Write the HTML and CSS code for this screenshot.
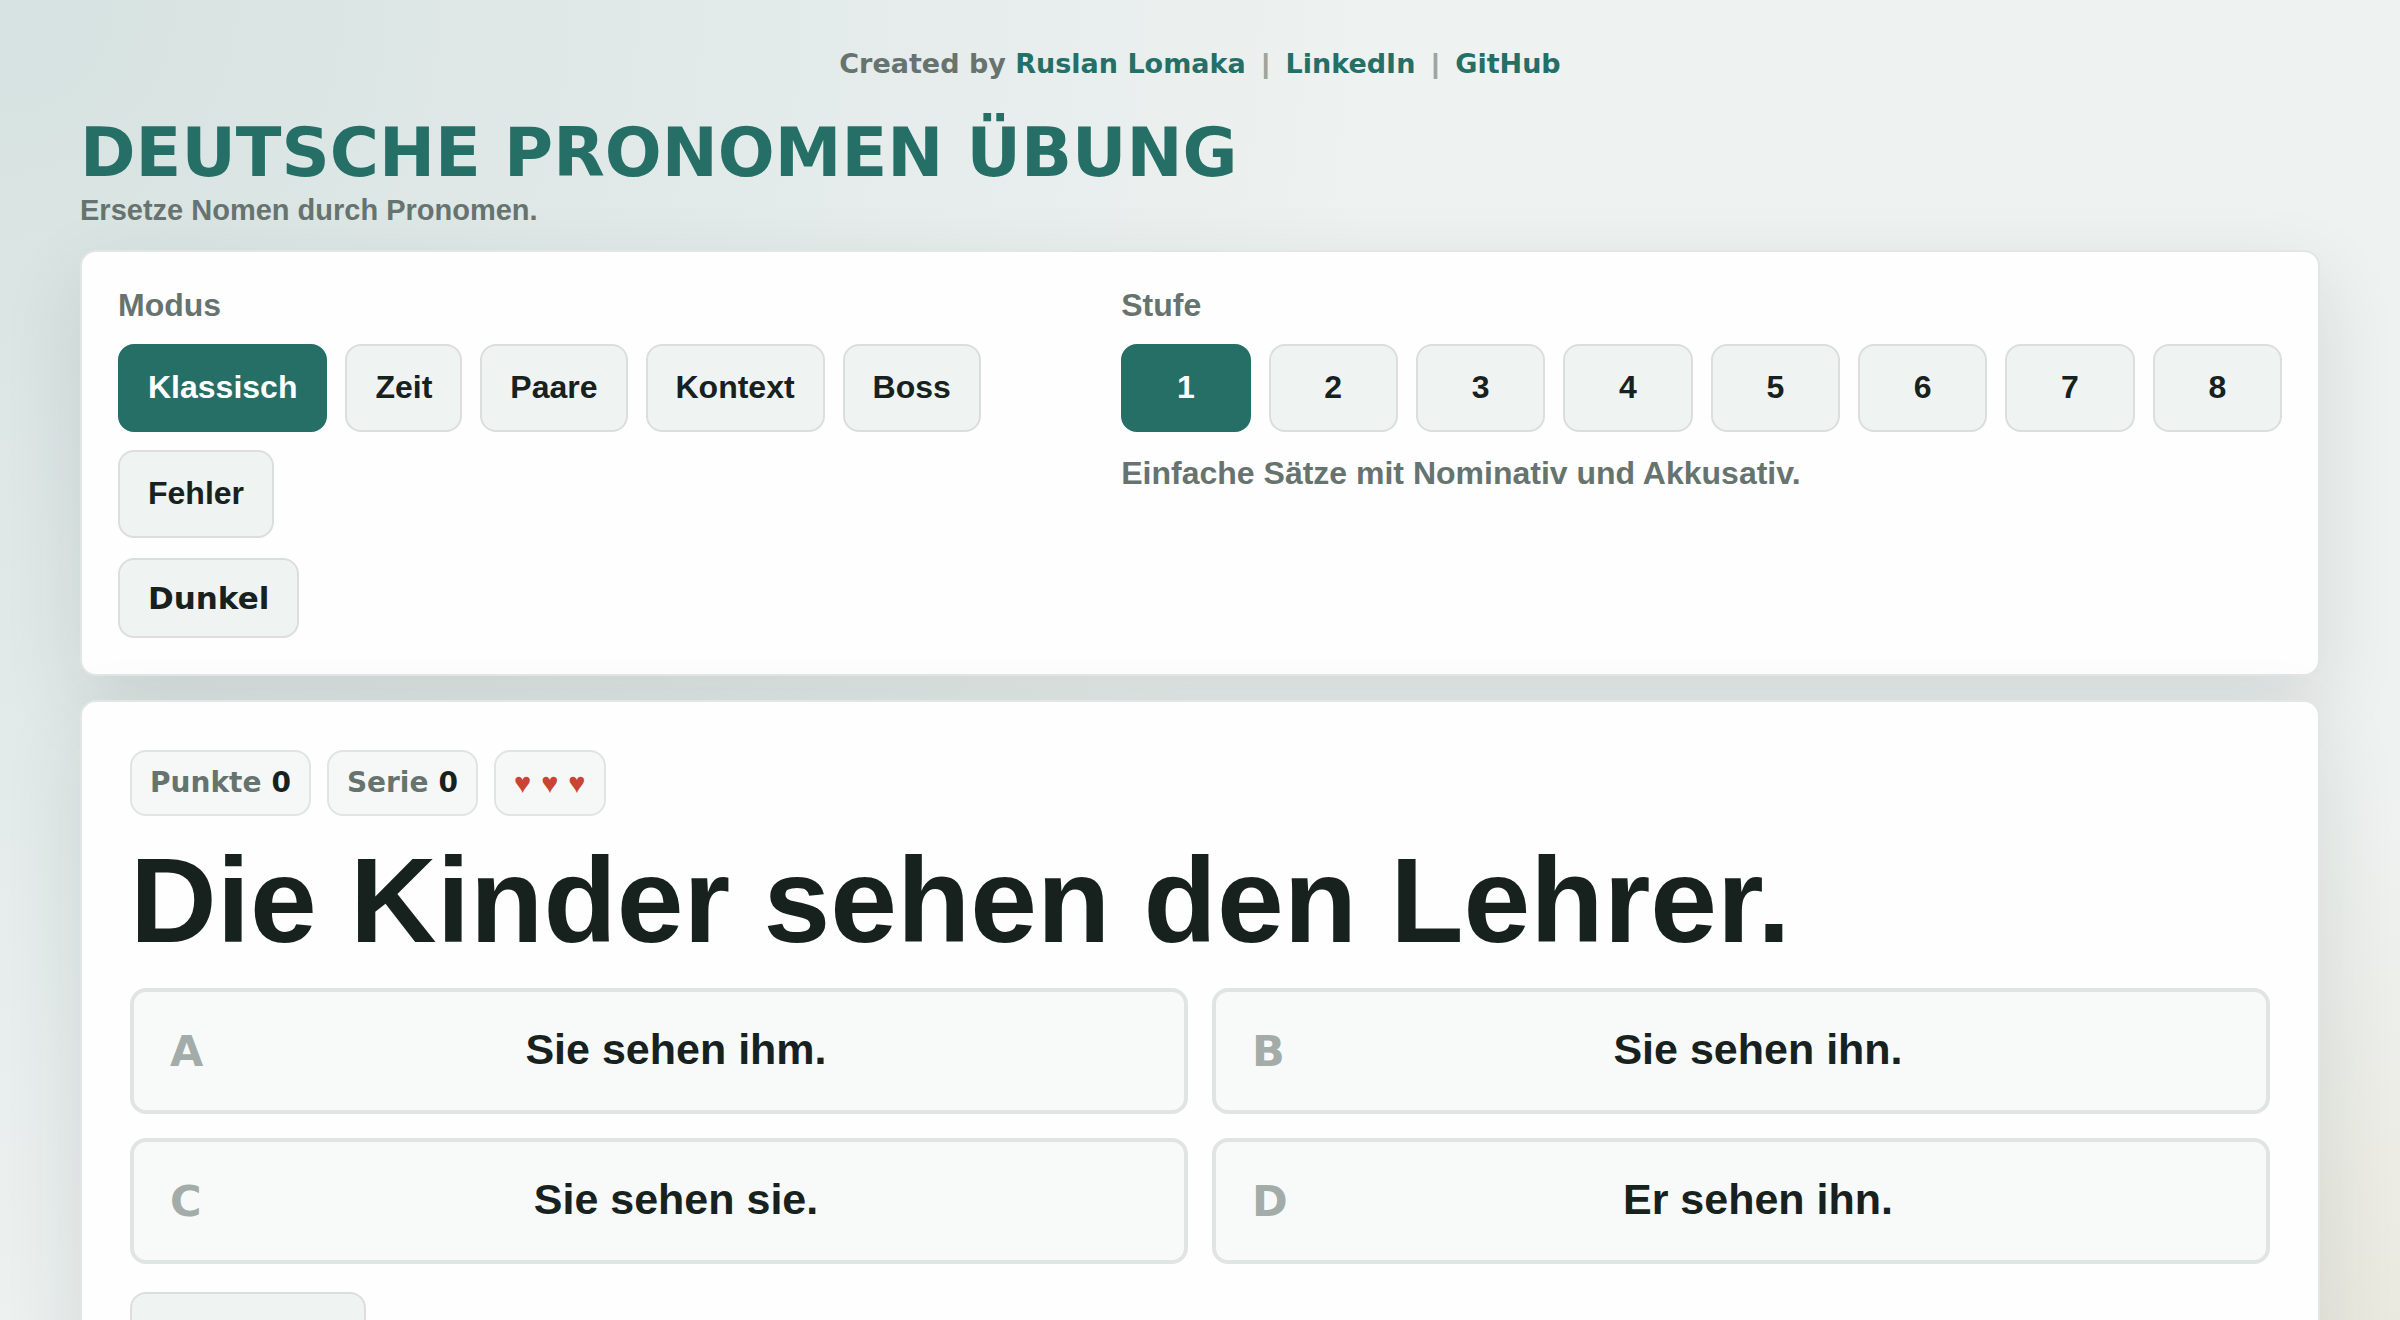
FILE: index.html
```
<!DOCTYPE html>
<html lang="de">

<head>
    <meta charset="UTF-8">
    <meta name="viewport" content="width=device-width, initial-scale=1.0">
    <title>Deutsche Pronomen Übung</title>

    <link rel="stylesheet" href="styles.css">
</head>

<body>
    <div class="page">
        <div class="credits">
            <span>Created by <a href="#">Ruslan Lomaka</a></span>
            <span class="divider">|</span>
            <a href="#">LinkedIn</a>
            <span class="divider">|</span>
            <a href="#">GitHub</a>
        </div>

        <header class="header">
            <h1>Deutsche Pronomen Übung</h1>
            <p>Ersetze Nomen durch Pronomen.</p>
        </header>

        <section class="panel controls">
            <div class="control-group">
                <h2 class="label">Modus</h2>
                <div class="modes">
                    <button type="button" class="btn active">Klassisch</button>
                    <button type="button" class="btn">Zeit</button>
                    <button type="button" class="btn">Paare</button>
                    <button type="button" class="btn">Kontext</button>
                    <button type="button" class="btn">Boss</button>
                    <button type="button" class="btn">Fehler</button>
                </div>
                <button type="button" class="btn theme-btn">Dunkel</button>
            </div>

            <div class="control-group">
                <h2 class="label">Stufe</h2>
                <div class="levels">
                    <button type="button" class="btn active">1</button>
                    <button type="button" class="btn">2</button>
                    <button type="button" class="btn">3</button>
                    <button type="button" class="btn">4</button>
                    <button type="button" class="btn">5</button>
                    <button type="button" class="btn">6</button>
                    <button type="button" class="btn">7</button>
                    <button type="button" class="btn">8</button>
                </div>
                <p class="level-info">Einfache Sätze mit Nominativ und Akkusativ.</p>
            </div>
        </section>

        <main class="panel game">
            <div class="stats">
                <div class="chip">Punkte <strong>0</strong></div>
                <div class="chip">Serie <strong>0</strong></div>
                <div class="chip hearts"><span>♥</span><span>♥</span><span>♥</span></div>
            </div>

            <h2 class="sentence">Die Kinder sehen den Lehrer.</h2>

            <div class="answers">
                <button type="button" class="answer"><span class="key">A</span><span class="text">Sie sehen ihm.</span></button>
                <button type="button" class="answer"><span class="key">B</span><span class="text">Sie sehen ihn.</span></button>
                <button type="button" class="answer"><span class="key">C</span><span class="text">Sie sehen sie.</span></button>
                <button type="button" class="answer"><span class="key">D</span><span class="text">Er sehen ihn.</span></button>
            </div>

            <button type="button" class="btn restart-btn">Neustart</button>
        </main>
    </div>
</body>

</html>
```

FILE: styles.css
```
:root {
    --ink: #17211e;
    --muted: #66736f;
    --accent: #256f67;
    --soft: #eff3f2;
    --line: #dadfdd;
    --heart: #c94434;
    --body-font: "Liberation Sans", Arial, sans-serif;
    --black-font: "Arial Black", "DejaVu Sans", sans-serif;
}

* {
    box-sizing: border-box;
    margin: 0;
    padding: 0;
}

body {
    min-height: 100vh;
    color: var(--ink);
    font-family: var(--body-font);
    font-size: 32px;
    font-weight: 700;
    line-height: 34px;
    background:
        radial-gradient(circle at top left, rgba(37, 111, 103, 0.12), transparent 1400px),
        radial-gradient(circle at bottom right, rgba(201, 150, 52, 0.12), transparent 700px),
        #eef2f1;
}

a {
    color: var(--accent);
    text-decoration: none;
}

.page {
    padding: 48px 80px;
}

.credits {
    display: flex;
    justify-content: center;
    gap: 16px;
    color: var(--muted);
    font-family: var(--black-font);
    font-size: 27px;
    font-weight: 900;
    line-height: 32px;
}

.divider {
    font-family: var(--body-font);
    font-size: 28px;
    opacity: 0.6;
}

.header {
    margin: 34px 0 23px;
}

.header h1 {
    color: var(--accent);
    font-family: var(--black-font);
    font-size: 67px;
    font-weight: 900;
    line-height: 78px;
    text-transform: uppercase;
}

.header p {
    margin-top: 1px;
    color: var(--muted);
    font-size: 29px;
}

.panel {
    background: #fefefe;
    border: 2px solid #e2e6e4;
    border-radius: 16px;
    box-shadow: 0 28px 80px rgba(23, 50, 44, 0.12);
}

.controls {
    display: grid;
    grid-template-columns: 1fr 1.2fr;
    gap: 36px;
    padding: 36px;
}

.label {
    margin-bottom: 22px;
    color: var(--muted);
    font-size: 32px;
}

.modes {
    display: flex;
    flex-wrap: wrap;
    gap: 18px;
}

.levels {
    display: grid;
    grid-template-columns: repeat(8, 1fr);
    gap: 18px;
}

.btn {
    min-height: 88px;
    padding: 0 28px 2px;
    color: var(--ink);
    font: inherit;
    background: var(--soft);
    border: 2px solid var(--line);
    border-radius: 16px;
    cursor: pointer;
}

.btn.active {
    color: #fff;
    background: var(--accent);
    border-color: var(--accent);
}

.theme-btn {
    min-height: 80px;
    margin-top: 20px;
    padding-bottom: 0;
    font-family: var(--black-font);
    font-size: 31px;
    font-weight: 900;
}

.level-info {
    margin-top: 24px;
    color: var(--muted);
}

.game {
    margin-top: 24px;
    padding: 48px;
}

.stats {
    display: flex;
    gap: 16px;
    font-family: var(--black-font);
    font-size: 28px;
    font-weight: 900;
}

.chip {
    display: flex;
    gap: 10px;
    padding: 14px 18px;
    color: var(--muted);
    background: #f6f8f7;
    border: 2px solid #e0e4e3;
    border-radius: 16px;
}

.chip strong {
    color: var(--ink);
    font-weight: 900;
}

.hearts {
    color: var(--heart);
    font-family: var(--body-font);
    font-size: 29px;
}

.sentence {
    margin: 20px 0 24px;
    font-size: 120px;
    line-height: 128px;
}

.answers {
    display: grid;
    grid-template-columns: repeat(2, 1fr);
    gap: 24px;
}

.answer {
    display: flex;
    align-items: center;
    min-height: 126px;
    padding: 0 36px;
    color: var(--ink);
    font: inherit;
    font-size: 43px;
    background: #f8faf9;
    border: 4px solid #e0e4e3;
    border-radius: 16px;
    cursor: pointer;
}

.answer .key {
    width: 34px;
    color: #a3aca9;
    font-family: var(--black-font);
    font-weight: 900;
    text-align: left;
}

.answer .text {
    flex: 1;
    padding-bottom: 4px;
}

.restart-btn {
    min-width: 236px;
    min-height: 96px;
    margin-top: 28px;
}
```
